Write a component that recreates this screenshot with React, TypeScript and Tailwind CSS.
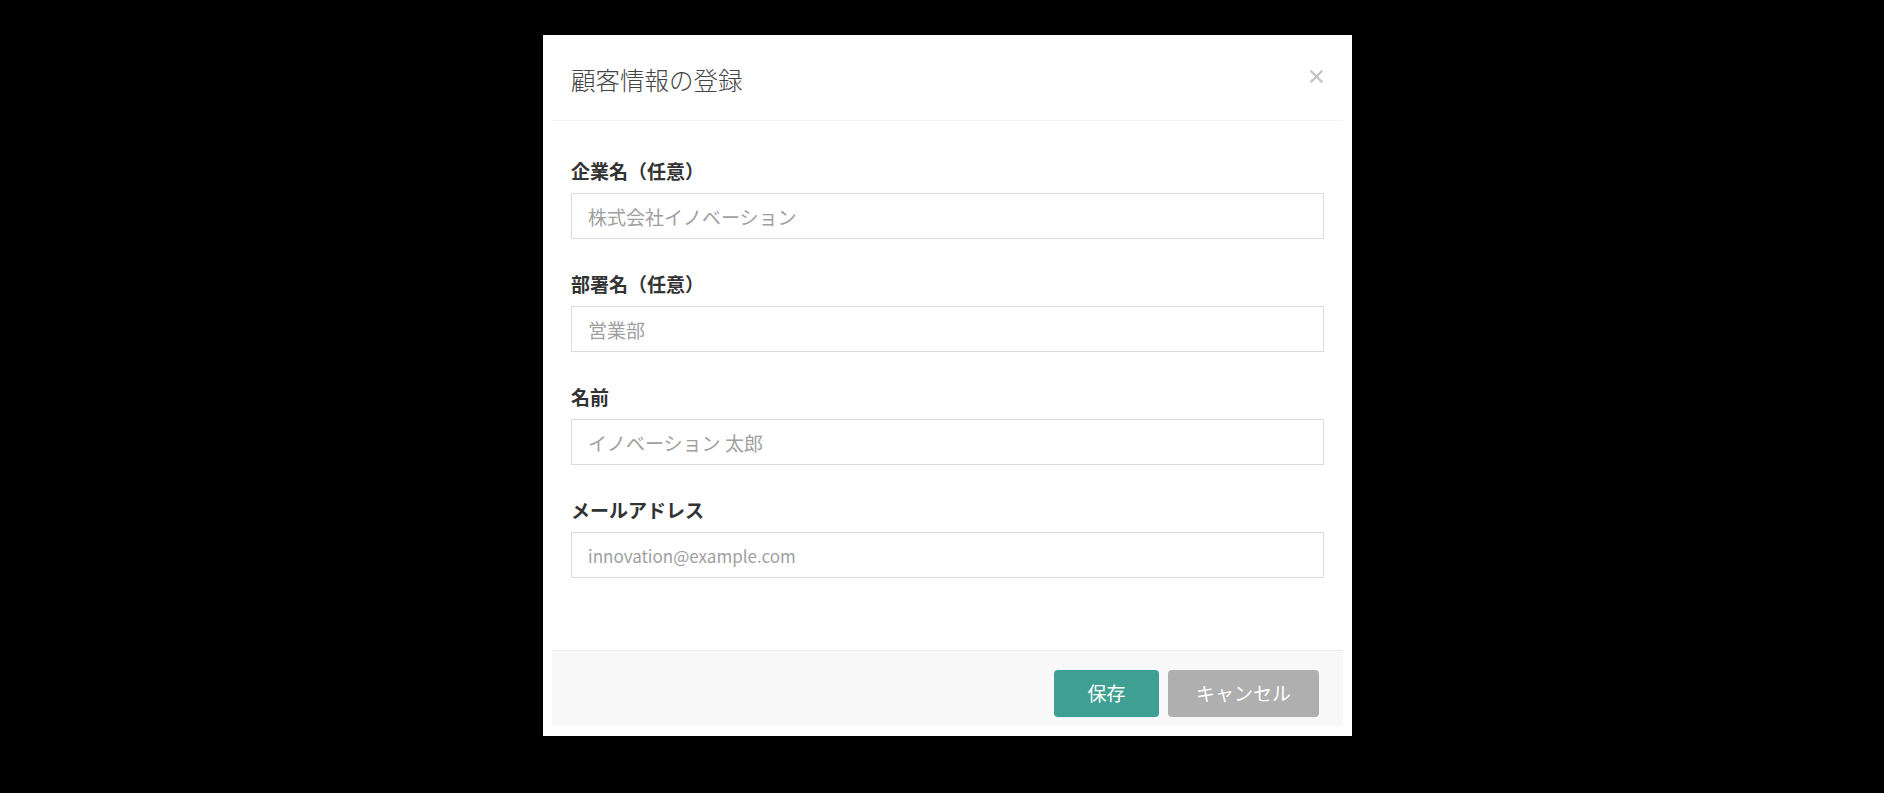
const fields = [
  { label: "企業名（任意）", placeholder: "株式会社イノベーション", type: "text", size: "text-[19px]" },
  { label: "部署名（任意）", placeholder: "営業部", type: "text", size: "text-[19px]" },
  { label: "名前", placeholder: "イノベーション 太郎", type: "text", size: "text-[19px]" },
  { label: "メールアドレス", placeholder: "innovation@example.com", type: "email", size: "text-[17px]" },
];

function CloseButton() {
  return (
    <button type="button" aria-label="閉じる" className="mt-[20px] flex h-6 w-6 items-center justify-center self-start">
      <svg width="13" height="13" viewBox="0 0 13 13" fill="none">
        <path d="M1.5 1.5l10 10M11.5 1.5l-10 10" stroke="#c6c6c6" strokeWidth="2.4" strokeLinecap="square" />
      </svg>
    </button>
  );
}

export default function App() {
  return (
    <div className="flex h-[793px] w-full justify-center bg-black pl-[11px] pt-[35px] font-['Noto_Sans_CJK_JP','Noto_Sans',sans-serif]">
      <div className="h-fit w-[809px] bg-white px-[9px] pt-[9px] pb-[10px]">
        {/* header */}
        <div className="flex h-[77px] items-center justify-between border-b border-[#f3f3f3] pl-[19px] pr-[15px] pb-[4px]">
          <h2 className="text-[24.5px] font-light leading-none text-[#444]">顧客情報の登録</h2>
          <CloseButton />
        </div>

        {/* form */}
        <form className="flex flex-col gap-[33px] px-[19px] pt-[38px] pb-[72px]">
          {fields.map((f) => (
            <div key={f.label} className="flex flex-col">
              <label className="mb-[10px] h-[24px] text-[19px] font-bold leading-[24px] text-[#333]">{f.label}</label>
              <input
                type={f.type}
                placeholder={f.placeholder}
                className={`h-[46px] w-full border border-[#dcdce0] bg-white px-[16px] ${f.size} text-[#333] outline-none placeholder:text-[#a0a0a0]`}
              />
            </div>
          ))}
        </form>

        {/* footer */}
        <div className="flex justify-end gap-[9px] border-t border-[#ebebeb] bg-[#f8f8f8] pt-[19px] pb-[9px] pr-[24px]">
          <button type="button" className="h-[47px] w-[105px] rounded-[4px] bg-[#3f9f93] text-[19px] text-white">
            保存
          </button>
          <button type="button" className="h-[47px] w-[151px] rounded-[4px] bg-[#afafaf] text-[19px] text-white">
            キャンセル
          </button>
        </div>
      </div>
    </div>
  );
}
